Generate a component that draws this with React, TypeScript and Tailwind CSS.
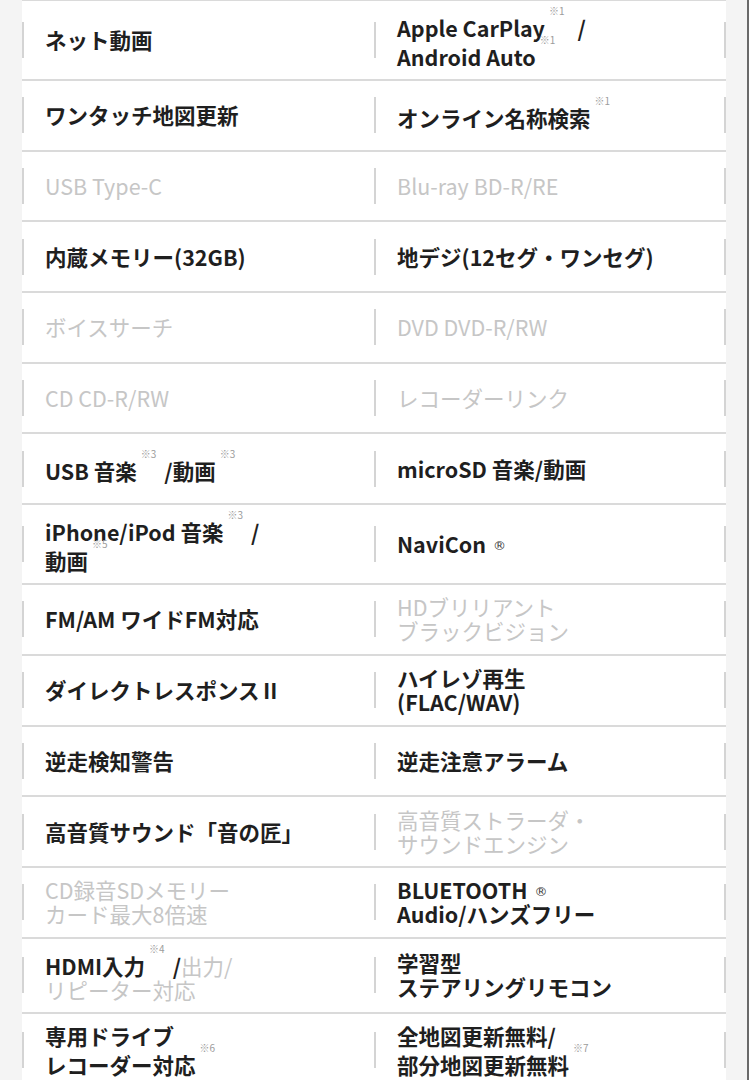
import type { ReactNode } from 'react';

// tiny note marks like ※1, raised above the line
const Note = ({ n }: { n: string }) => (
  <span className="ml-[4px] mr-[8px] align-[22px] text-[10px] leading-[0] font-normal tracking-normal text-[#9c9c9c]">
    ※{n}
  </span>
);

const Reg = () => (
  <span className="ml-[7px] align-[3px] font-['DejaVu_Sans'] text-[13px] leading-[0] font-normal tracking-normal text-[#3a3a3a]">
    ®
  </span>
);

const On = ({ children }: { children: ReactNode }) => (
  <span className="font-bold text-[#1f1f1f]">{children}</span>
);

const Off = ({ children }: { children: ReactNode }) => (
  <span className="font-normal text-[#c6c6c6]">{children}</span>
);

const rows: [ReactNode, ReactNode][] = [
  [
    <On>ネット動画</On>,
    <On>
      Apple CarPlay<Note n="1" /> /<br />
      Android Auto<Note n="1" />
    </On>,
  ],
  [
    <On>ワンタッチ地図更新</On>,
    <On>
      オンライン名称検索<Note n="1" />
    </On>,
  ],
  [<Off>USB Type-C</Off>, <Off>Blu-ray BD-R/RE</Off>],
  [<On>内蔵メモリー(32GB)</On>, <On>地デジ(12セグ・ワンセグ)</On>],
  [<Off>ボイスサーチ</Off>, <Off>DVD DVD-R/RW</Off>],
  [<Off>CD CD-R/RW</Off>, <Off>レコーダーリンク</Off>],
  [
    <On>
      USB 音楽<Note n="3" />/動画<Note n="3" />
    </On>,
    <On>microSD 音楽/動画</On>,
  ],
  [
    <On>
      iPhone/iPod 音楽<Note n="3" />/<br />
      動画<Note n="5" />
    </On>,
    <On>
      NaviCon<Reg />
    </On>,
  ],
  [
    <On>FM/AM ワイドFM対応</On>,
    <Off>
      HDブリリアント<br />
      ブラックビジョン
    </Off>,
  ],
  [
    <On>ダイレクトレスポンスⅡ</On>,
    <On>
      ハイレゾ再生<br />
      (FLAC/WAV)
    </On>,
  ],
  [<On>逆走検知警告</On>, <On>逆走注意アラーム</On>],
  [
    <On>高音質サウンド「音の匠」</On>,
    <Off>
      高音質ストラーダ・<br />
      サウンドエンジン
    </Off>,
  ],
  [
    <Off>
      CD録音SDメモリー<br />
      カード最大8倍速
    </Off>,
    <On>
      BLUETOOTH<Reg />
      <br />
      Audio/ハンズフリー
    </On>,
  ],
  [
    <>
      <On>
        HDMI入力<Note n="4" />/
      </On>
      <Off>
        出力/
        <br />
        リピーター対応
      </Off>
    </>,
    <On>
      学習型
      <br />
      ステアリングリモコン
    </On>,
  ],
  [
    <On>
      専用ドライブ
      <br />
      レコーダー対応<Note n="6" />
    </On>,
    <On>
      全地図更新無料/
      <br />
      部分地図更新無料<Note n="7" />
    </On>,
  ],
];

const Bar = () => <div className="h-[36px] w-[2px] shrink-0 bg-[#d4d4d4]" />;

const Cell = ({ children, last }: { children: ReactNode; last?: boolean }) => (
  <div className="flex w-[352px] items-center py-[10px]">
    <Bar />
    <div className="flex-1 pl-[21px] text-[21.5px] leading-[24px]">{children}</div>
    {last && <Bar />}
  </div>
);

export default function App() {
  return (
    <div
      className="flex min-h-[1080px] w-full bg-[#f4f4f4]"
      style={{ fontFamily: '"Noto Sans CJK JP", "Noto Sans", sans-serif' }}
    >
      <div className="w-[22px] shrink-0" />
      <div className="w-[704px] shrink-0 border-t border-[#dadada] bg-white">
        {rows.map(([l, r], i) => (
          <div key={i} className="flex min-h-[70.7px] border-b-2 border-[#dadada]">
            <Cell>{l}</Cell>
            <Cell last>{r}</Cell>
          </div>
        ))}
      </div>
      <div className="flex-1 border-r-2 border-[#6a6a6a]" />
    </div>
  );
}
